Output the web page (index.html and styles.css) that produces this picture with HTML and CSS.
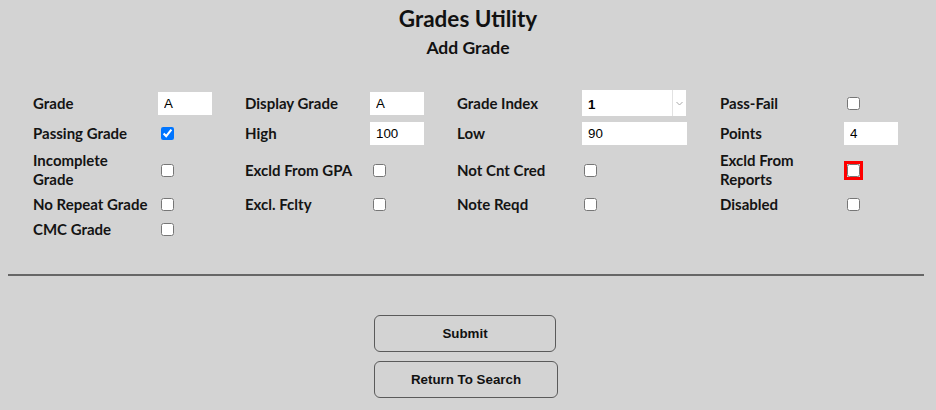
FILE: index.html
```html
<!DOCTYPE html>
<html lang="en">
<head>
<meta charset="utf-8">
<title>Grades Utility</title>
<link rel="stylesheet" href="styles.css">
</head>
<body>
<h1 class="title">Grades Utility</h1>
<h2 class="subtitle">Add Grade</h2>
<form class="grade-form">
  <div class="grid">
    <label class="lbl">Grade</label>
    <div class="cell"><input class="txt short" type="text" value="A"></div>
    <label class="lbl">Display Grade</label>
    <div class="cell"><input class="txt short" type="text" value="A"></div>
    <label class="lbl">Grade Index</label>
    <div class="cell">
      <div class="select">
        <select class="select-native"><option>1</option></select>
        <span class="select-arrow"><svg width="7" height="5" viewBox="0 0 7 5"><polyline points="0.5,1 3.5,4 6.5,1" fill="none" stroke="#a8a8a8" stroke-width="1"/></svg></span>
      </div>
    </div>
    <label class="lbl">Pass-Fail</label>
    <div class="cell"><input class="chk" type="checkbox"></div>

    <label class="lbl">Passing Grade</label>
    <div class="cell"><input class="chk" type="checkbox" checked></div>
    <label class="lbl">High</label>
    <div class="cell"><input class="txt short" type="text" value="100"></div>
    <label class="lbl">Low</label>
    <div class="cell"><input class="txt wide" type="text" value="90"></div>
    <label class="lbl">Points</label>
    <div class="cell"><input class="txt short" type="text" value="4"></div>

    <label class="lbl">Incomplete<br>Grade</label>
    <div class="cell"><input class="chk" type="checkbox"></div>
    <label class="lbl">Excld From GPA</label>
    <div class="cell"><input class="chk" type="checkbox"></div>
    <label class="lbl">Not Cnt Cred</label>
    <div class="cell"><input class="chk" type="checkbox"></div>
    <label class="lbl">Excld From<br>Reports</label>
    <div class="cell"><input class="chk focused" type="checkbox"></div>

    <label class="lbl">No Repeat Grade</label>
    <div class="cell"><input class="chk" type="checkbox"></div>
    <label class="lbl">Excl. Fclty</label>
    <div class="cell"><input class="chk" type="checkbox"></div>
    <label class="lbl">Note Reqd</label>
    <div class="cell"><input class="chk" type="checkbox"></div>
    <label class="lbl">Disabled</label>
    <div class="cell"><input class="chk" type="checkbox"></div>

    <label class="lbl">CMC Grade</label>
    <div class="cell"><input class="chk" type="checkbox"></div>
  </div>
  <hr class="divider">
  <div class="actions">
    <button type="button" class="btn btn-submit">Submit</button>
    <button type="button" class="btn btn-return">Return To Search</button>
  </div>
</form>
</body>
</html>
```

FILE: styles.css
```css
html, body {
  background: #d3d3d3;
}
body {
  margin: 8px;
  font-family: Lato, "Noto Sans", sans-serif;
  color: #111;
}
.title {
  margin: 0;
  text-align: center;
  font-size: 22.5px;
  line-height: 22px;
  font-weight: 700;
}
.subtitle {
  margin: 8px 0 0;
  text-align: center;
  font-size: 17.5px;
  line-height: 20px;
  font-weight: 700;
}
.grade-form {
  margin: 32px 0 0;
}
.grid {
  display: grid;
  grid-template-columns: 125px 87px 125px 87px 124px 139px 124px 1fr;
  row-gap: 6px;
  align-items: center;
  padding-left: 25px;
}
.lbl {
  font-size: 15px;
  line-height: 19px;
  font-weight: 700;
  color: #141414;
  white-space: nowrap;
}
.cell {
  display: flex;
  align-items: center;
}
.txt {
  box-sizing: border-box;
  height: 23px;
  border: none;
  background: #fff;
  padding: 0 6px;
  font-family: "Liberation Sans", Arial, sans-serif;
  font-size: 13.33px;
  color: #000;
  margin: 0;
}
.txt.short { width: 54px; }
.txt.wide { width: 105px; margin-left: 1px; }
.chk {
  width: 13px;
  height: 13px;
  margin: 3px;
}
.chk.focused {
  outline: 3px solid #ff0000;
  outline-offset: 0;
}
.select {
  display: flex;
  box-sizing: border-box;
  width: 104px;
  height: 26px;
  margin-left: 1px;
  background: #fff;
}
.select-native {
  flex: 1;
  min-width: 0;
  appearance: none;
  -webkit-appearance: none;
  border: none;
  background: transparent;
  padding: 2px 0 0 6px;
  font-family: "Liberation Sans", Arial, sans-serif;
  font-size: 13.33px;
  font-weight: 700;
  color: #000;
  outline: none;
}
.select-arrow {
  width: 13px;
  border-left: 1px solid #e2e2e2;
  display: flex;
  align-items: center;
  justify-content: center;
}
.divider {
  margin: 35px 4px 0 0;
  border: none;
  height: 2px;
  background: #666;
}
.actions {
  width: 188px;
  margin: 39px auto 0;
  display: flex;
  flex-direction: column;
  align-items: flex-start;
  gap: 9px;
}
.btn {
  height: 37px;
  border: 1px solid #5a5a5a;
  border-radius: 6px;
  background: #d3d3d3;
  font-family: "Liberation Sans", Arial, sans-serif;
  font-size: 13.33px;
  font-weight: 700;
  color: #111;
  padding: 0;
}
.btn-submit { width: 182px; }
.btn-return { width: 184px; }
```
